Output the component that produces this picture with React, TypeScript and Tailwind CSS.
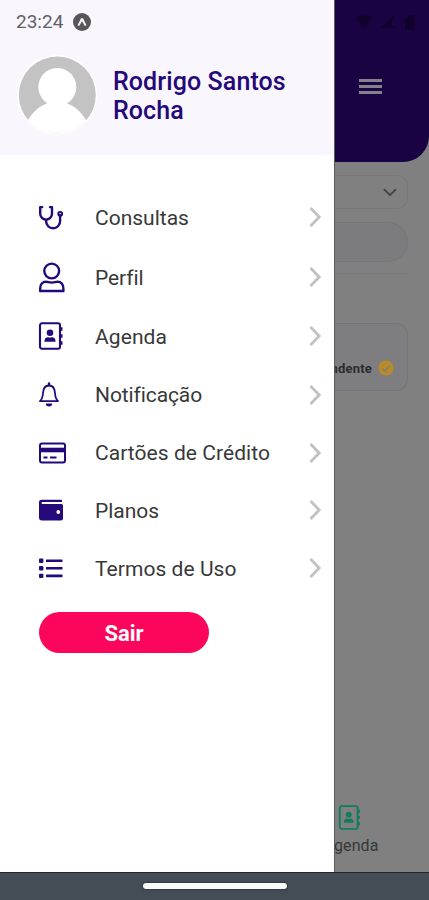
import React from 'react';

interface MenuItem {
    label: string;
    icon: React.ReactNode;
    rowClass: string;
    labelClass: string;
}

const StethoscopeIcon = () => (
    <svg width="27" height="27" viewBox="0 0 27 27" fill="none" stroke="currentColor" strokeWidth="2.4" strokeLinecap="round">
        <path d="M4.2 3.1H2.2v6.7a5.9 5.9 0 0 0 11.8 0V3.1h-2" strokeLinejoin="round" />
        <path d="M8.1 15.9v1.4a7 7 0 0 0 14 0v-6" />
        <circle cx="22.2" cy="9.8" r="1.9" strokeWidth="2" />
    </svg>
);

const UserIcon = () => (
    <svg width="28" height="31" viewBox="0 0 28 31" fill="none" stroke="currentColor" strokeWidth="2.4">
        <circle cx="13.7" cy="9" r="7.400" />
        <path d="M2.200 29v-2.500c0-4 2.300-6.700 5.800-6.700 2 0 3 .8 5.800.8s3.800-.8 5.800-.8c3.500 0 5.800 2.700 5.800 6.700V29z" strokeLinejoin="round" />
    </svg>
);

const AddressBookIcon = ({ size, className }: { size: number; className?: string }) => (
    <svg width={size} height={size} viewBox="0 0 28 28" fill="none" stroke="currentColor" strokeWidth="2.100" className={className}>
        <rect x="2" y="1.300" width="20" height="25.400" rx="2" />
        <path d="M22.500 7h2M22.500 14h2M22.500 21h2" strokeWidth="3.600" />
        <circle cx="12" cy="10.800" r="3.300" fill="currentColor" stroke="none" />
        <path d="M6.500 19.800v-1c0-2 1.400-3.600 3.300-3.600.8 0 1.200.4 2.200.4s1.400-.4 2.200-.4c1.900 0 3.300 1.600 3.300 3.600v1z" fill="currentColor" stroke="none" />
    </svg>
);

const BellIcon = () => (
    <svg width="22" height="25" viewBox="0 0 22 25" fill="none" stroke="currentColor" strokeWidth="1.800">
        <path d="M2 19.200c2-1.800 2.700-3.500 3-8.200.3-4.800 2.300-7.500 6-7.500s5.700 2.700 6 7.500c.3 4.700 1 6.400 3 8.200z" strokeLinejoin="round" />
        <path d="M11 3V1.500" strokeWidth="2.400" strokeLinecap="round" />
        <path d="M7.800 21.600h6.400a3.200 3 0 0 1-6.400 0z" fill="currentColor" stroke="none" />
    </svg>
);

const CardIcon = () => (
    <svg width="29" height="22" viewBox="0 0 29 22" fill="none" stroke="currentColor" strokeWidth="2">
        <rect x="2" y="1.500" width="25" height="19" rx="2" />
        <path d="M2 8h25" strokeWidth="4.600" />
        <path d="M5.500 15.500h4M12 15.500h6.500" />
    </svg>
);

const WalletIcon = () => (
    <svg width="26" height="22" viewBox="0 0 26 22">
        <path
            d="M3.500.8H23a1 1 0 0 1 1 1V3H4.500a1 1 0 0 0 0 2H23.500a1.500 1.500 0 0 1 1.500 1.500v13a2 2 0 0 1-2 2H4a3 3 0 0 1-3-3V3.300A2.500 2.500 0 0 1 3.500.8z"
            fill="currentColor"
        />
        <circle cx="20.300" cy="13" r="1.900" fill="#fff" />
    </svg>
);

const ListIcon = () => (
    <svg width="25" height="21" viewBox="0 0 25 21" fill="currentColor">
        {[0.5, 8.1, 15.7].map((y) => (
            <g key={y}>
                <rect x="1" y={y} width="4.400" height="4.400" rx="1" />
                <rect x="8" y={y + 0.9} width="16.500" height="2.600" rx="0.6" />
            </g>
        ))}
    </svg>
);

const Chevron = () => (
    <svg width="14" height="22" viewBox="0 0 14 22" fill="none" stroke="#c2c2c2" strokeWidth="2.900">
        <path d="M1.500 2l8.700 9-8.700 9" />
    </svg>
);

const menuItems: MenuItem[] = [
    { label: 'Consultas', icon: <StethoscopeIcon />, rowClass: 'h-[60px]', labelClass: 'tracking-[0px]' },
    { label: 'Perfil', icon: <UserIcon />, rowClass: 'h-[60px]', labelClass: '-tracking-[0.1px]' },
    { label: 'Agenda', icon: <AddressBookIcon size={28} />, rowClass: 'h-[58px]', labelClass: 'tracking-[0.1px]' },
    { label: 'Notificação', icon: <BellIcon />, rowClass: 'h-[59px]', labelClass: '-tracking-[0.1px]' },
    { label: 'Cartões de Crédito', icon: <CardIcon />, rowClass: 'h-[57px]', labelClass: 'tracking-[0.05px]' },
    { label: 'Planos', icon: <WalletIcon />, rowClass: 'h-[58px]', labelClass: 'tracking-[0px]' },
    { label: 'Termos de Uso', icon: <ListIcon />, rowClass: 'h-[58px]', labelClass: 'tracking-[0.05px]' },
];

const Avatar = () => (
    <svg width="80" height="82" viewBox="0 0 80 82" className="shrink-0">
        <defs>
            <clipPath id="avatar">
                <circle cx="40.300" cy="41" r="38.500" />
            </clipPath>
        </defs>
        <circle cx="40" cy="41" r="40" fill="#fff" />
        <g clipPath="url(#avatar)">
            <rect width="80" height="82" fill="#c3c3c3" />
            <circle cx="40.300" cy="33" r="19" fill="#fff" />
            <path d="M6 82C8 62 24 47.500 40 47.500S72 62 74 82z" fill="#fff" />
        </g>
        <path d="M11 66A38.500 38.500 0 0 0 69 66z" fill="#fff" />
    </svg>
);

const StatusBar = () => (
    <div className="flex h-[44px] items-center gap-[10px] pl-[16px] text-[19px] text-[#626066]">
        <span>23:24</span>
        <svg width="18" height="18" viewBox="0 0 18 18">
            <circle cx="9" cy="9" r="9" fill="#58565b" />
            <path d="M4.500 12.300L8 5.200h2l3.500 7.100-1.700.7L9 8.300 6.200 13z" fill="#f5f2f8" />
        </svg>
    </div>
);

const Drawer = () => (
    <aside className="flex w-[334px] shrink-0 flex-col bg-white">
        <header className="h-[155px] bg-[#f9f6fd]">
            <StatusBar />
            <div className="flex items-center gap-[16px] pt-[10px] pl-[17px]">
                <Avatar />
                <h1 className="w-[200px] pt-px text-[25px] leading-[29px] font-medium tracking-[0.1px] text-[#25087a]">
                    Rodrigo Santos Rocha
                </h1>
            </div>
        </header>

        <nav className="pt-[32px]">
            {menuItems.map((item) => (
                <a key={item.label} className={`flex items-center pr-[11px] pl-[38px] ${item.rowClass}`}>
                    <span className="flex w-[57px] shrink-0 text-[#25087a]">{item.icon}</span>
                    <span className={`flex-1 pt-[3px] text-[21px] whitespace-nowrap text-[#383838] ${item.labelClass}`}>
                        {item.label}
                    </span>
                    <Chevron />
                </a>
            ))}
        </nav>

        <button className="mt-[15px] ml-[39px] h-[41px] w-[170px] rounded-full bg-[#fb065c] pt-[3px] text-[22px] leading-none font-bold text-white">
            Sair
        </button>
    </aside>
);

const DimmedPage = () => (
    <main className="flex min-w-0 flex-1 flex-col overflow-hidden border-l border-[#5c5c5c] bg-[#808080]">
        <header className="h-[162px] shrink-0 rounded-br-[26px] bg-[#190343]">
            <div className="flex h-[44px] items-center justify-end gap-[9px] pr-[14px] text-[#10022c]">
                <svg width="16" height="14" viewBox="0 0 16 14" fill="currentColor">
                    <path d="M0 3.500C4.500-.5 11.500-.5 16 3.500L8 13z" />
                </svg>
                <svg width="15" height="14" viewBox="0 0 15 14" fill="currentColor">
                    <path d="M0 13L13 0v4h-2v9zM12 11h2v2h-2z" />
                </svg>
                <svg width="10" height="15" viewBox="0 0 10 15" fill="currentColor">
                    <path d="M4 0h5.500v15H0V4z" />
                </svg>
            </div>
            <div className="flex flex-col gap-[3px] pt-[35px] pl-[24px]">
                <span className="h-[3px] w-[23px] bg-[#84808c]" />
                <span className="h-[3px] w-[23px] bg-[#84808c]" />
                <span className="h-[3px] w-[23px] bg-[#84808c]" />
            </div>
        </header>

        <div className="pr-[21px]">
            <div className="mt-[13px] flex h-[34px] items-center justify-end rounded-r-[12px] border border-l-0 border-[#777777] pr-[10px]">
                <svg width="14" height="9" viewBox="0 0 14 9" fill="none" stroke="#454545" strokeWidth="1.900">
                    <path d="M1 1.200l6 6 6-6" />
                </svg>
            </div>
            <div className="mt-[13px] h-[40px] rounded-r-full border border-l-0 border-[#77777a] bg-[#7c7c7f]" />
            <div className="mt-[11px] h-px bg-[#7c7c7c]" />
            <div className="mt-[49px] flex h-[68px] items-end justify-end gap-[6px] rounded-r-[12px] border border-l-0 border-[#757577] bg-[#7e7e80] pr-[13px] pb-[14px]">
                <span className="text-[13px] leading-[15px] font-bold tracking-[0.2px] whitespace-nowrap text-[#2c2c2e]">ndente</span>
                <svg width="16" height="16" viewBox="0 0 16 16" className="shrink-0">
                    <circle cx="8" cy="8" r="7.600" fill="#b98a28" />
                    <path d="M4.200 8.200l2.700 2.700 5-5.300" fill="none" stroke="#8c8170" strokeWidth="1.800" />
                </svg>
            </div>
        </div>

        <div className="mt-auto flex flex-col items-start pb-[15px]">
            <AddressBookIcon size={25} className="ml-[3px] text-[#107c60]" />
            <span className="mt-[5px] -ml-px text-[16px] leading-[22px] tracking-[0.1px] text-[#383838]">genda</span>
        </div>
    </main>
);

export default function App() {
    return (
        <div className="flex h-[900px] w-[429px] flex-col overflow-hidden font-[Roboto,sans-serif]">
            <div className="flex min-h-0 flex-1">
                <Drawer />
                <DimmedPage />
            </div>
            <footer className="flex h-[28px] shrink-0 justify-center border-t border-[#20272d] bg-[#444d55] pt-[10px]">
                <div className="h-[6px] w-[144px] rounded-full bg-[#f8fafa] shadow-[0_0_1px_1px_#303940]" />
            </footer>
        </div>
    );
}
